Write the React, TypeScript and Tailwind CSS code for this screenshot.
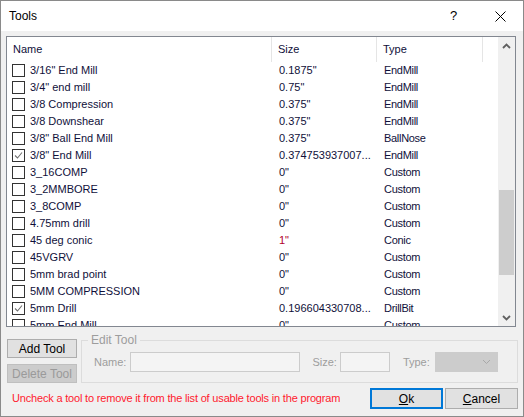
import React from "react";

type Row = { name: string; size: string; type: string; checked?: boolean; red?: boolean };

const rows: Row[] = [
  { name: '3/16" End Mill', size: '0.1875"', type: "EndMill" },
  { name: '3/4" end mill', size: '0.75"', type: "EndMill" },
  { name: "3/8 Compression", size: '0.375"', type: "EndMill" },
  { name: "3/8 Downshear", size: '0.375"', type: "EndMill" },
  { name: '3/8" Ball End Mill', size: '0.375"', type: "BallNose" },
  { name: '3/8" End Mill', size: "0.374753937007...", type: "EndMill", checked: true },
  { name: "3_16COMP", size: '0"', type: "Custom" },
  { name: "3_2MMBORE", size: '0"', type: "Custom" },
  { name: "3_8COMP", size: '0"', type: "Custom" },
  { name: "4.75mm drill", size: '0"', type: "Custom" },
  { name: "45 deg conic", size: '1"', type: "Conic", red: true },
  { name: "45VGRV", size: '0"', type: "Custom" },
  { name: "5mm brad point", size: '0"', type: "Custom" },
  { name: "5MM COMPRESSION", size: '0"', type: "Custom" },
  { name: "5mm Drill", size: "0.196604330708...", type: "DrillBit", checked: true },
  { name: "5mm End Mill", size: '0"', type: "Custom" },
];

function Check({ checked }: { checked?: boolean }) {
  return (
    <div className="w-[13px] h-[13px] border border-[#333333] bg-white flex items-center justify-center shrink-0">
      {checked && (
        <svg width="11" height="11" viewBox="0 0 11 11">
          <polyline points="2,5.5 4.5,8 9,2.5" fill="none" stroke="#707070" strokeWidth="1.1" />
        </svg>
      )}
    </div>
  );
}

function Chevron({ down }: { down?: boolean }) {
  return (
    <svg width="9" height="6" viewBox="0 0 9 6">
      <polyline
        points={down ? "1,1 4.5,4.5 8,1" : "1,5 4.5,1.5 8,5"}
        fill="none"
        stroke="#606060"
        strokeWidth="1.8"
      />
    </svg>
  );
}

export default function App() {
  return (
    <div
      className="w-[524px] h-[417px] border border-[#8a8a8a] bg-[#f0f0f0] flex flex-col overflow-hidden text-[11px] text-[#10103a]"
      style={{ fontFamily: '"Liberation Sans", Arial, sans-serif' }}
    >
      {/* Title bar */}
      <div className="h-[30px] bg-white flex items-center shrink-0">
        <div className="pl-[8px] text-[12px] text-black flex-1">Tools</div>
        <div className="w-[12px] text-[13px] text-black mr-[33px]">?</div>
        <div className="mr-[17px] flex items-center">
          <svg width="11" height="11" viewBox="0 0 11 11">
            <line x1="0.5" y1="0.5" x2="10.5" y2="10.5" stroke="#000" strokeWidth="1" />
            <line x1="10.5" y1="0.5" x2="0.5" y2="10.5" stroke="#000" strokeWidth="1" />
          </svg>
        </div>
      </div>

      {/* Body */}
      <div className="flex flex-col pl-[5px] pt-[5px]">
        {/* List view */}
        <div className="w-[510px] h-[291px] border border-[#828790] bg-white flex overflow-hidden">
          <div className="flex-1 flex flex-col overflow-hidden">
            <div className="h-[25px] flex shrink-0">
              <div className="w-[265px] border-r border-[#e5e5e5] pl-[6px] flex items-center">Name</div>
              <div className="w-[105px] border-r border-[#e5e5e5] pl-[6px] flex items-center">Size</div>
              <div className="w-[106px] border-r border-[#e5e5e5] pl-[6px] flex items-center">Type</div>
            </div>
            {rows.map((r) => (
              <div key={r.name} className="h-[17px] flex shrink-0 items-center">
                <div className="w-[265px] pl-[5px] flex items-center gap-[5px] whitespace-nowrap">
                  <Check checked={r.checked} />
                  <span>{r.name}</span>
                </div>
                <div className={`w-[105px] pl-[7px] whitespace-nowrap ${r.red ? "text-[#b0002a]" : ""}`}>{r.size}</div>
                <div className="w-[106px] pl-[7px] whitespace-nowrap tracking-[-0.3px]">{r.type}</div>
              </div>
            ))}
          </div>
          {/* Scrollbar */}
          <div className="w-[17px] bg-[#f0f0f0] flex flex-col shrink-0">
            <div className="h-[17px] flex items-center justify-center shrink-0">
              <Chevron />
            </div>
            <div className="h-[136px] shrink-0" />
            <div className="h-[85px] bg-[#cdcdcd] mx-[1px] shrink-0" />
            <div className="flex-1" />
            <div className="h-[17px] flex items-center justify-center shrink-0">
              <Chevron down />
            </div>
          </div>
        </div>

        {/* Bottom controls */}
        <div className="flex mt-[12px] pl-[1px]">
          <div className="flex flex-col gap-[6px] w-[70px]">
            <button className="h-[19px] w-[70px] border border-[#adadad] bg-[#e1e1e1] text-black text-[12px] leading-none">
              Add Tool
            </button>
            <button className="h-[19px] w-[70px] border border-[#bfbfbf] bg-[#cccccc] text-[#9a9a9a] text-[12px] leading-none">
              Delete Tool
            </button>
          </div>
          <div className="relative ml-[4px] mt-[1px] w-[437px] h-[43px] border border-[#dcdcdc] flex items-center pt-[1px] text-[#9d9d9d] text-[11px]">
            <span className="absolute left-[6px] top-[-8px] bg-[#f0f0f0] px-[3px] text-[12px] leading-[14px]">Edit Tool</span>
            <span className="ml-[12px]">Name:</span>
            <div className="ml-[4px] w-[170px] h-[20px] border border-[#cccccc] bg-[#f4f4f4]" />
            <span className="ml-[12px]">Size:</span>
            <div className="ml-[3px] w-[50px] h-[20px] border border-[#cccccc] bg-[#f4f4f4]" />
            <span className="ml-[13px]">Type:</span>
            <div className="ml-[5px] w-[63px] h-[20px] border border-[#cccccc] bg-[#cccccc] flex items-center justify-end pr-[6px]">
              <svg width="9" height="6" viewBox="0 0 9 6">
                <polyline points="1,1 4.5,4.5 8,1" fill="none" stroke="#a8a8a8" strokeWidth="1" />
              </svg>
            </div>
          </div>
        </div>

        {/* Footer row */}
        <div className="flex items-center mt-[5px] h-[21px]">
          <div className="flex-1 pl-[6px] text-[#ff1a2e] text-[11px] tracking-[-0.18px] whitespace-nowrap">
            Uncheck a tool to remove it from the list of usable tools in the program
          </div>
          <button className="w-[73px] h-[21px] border-2 border-[#0078d7] bg-[#e1e1e1] text-black text-[12px] leading-none">
            <span className="underline">O</span>k
          </button>
          <button className="ml-[2px] mr-[5px] w-[73px] h-[21px] border border-[#adadad] bg-[#e1e1e1] text-black text-[12px] leading-none">
            <span className="underline">C</span>ancel
          </button>
        </div>
      </div>
    </div>
  );
}
